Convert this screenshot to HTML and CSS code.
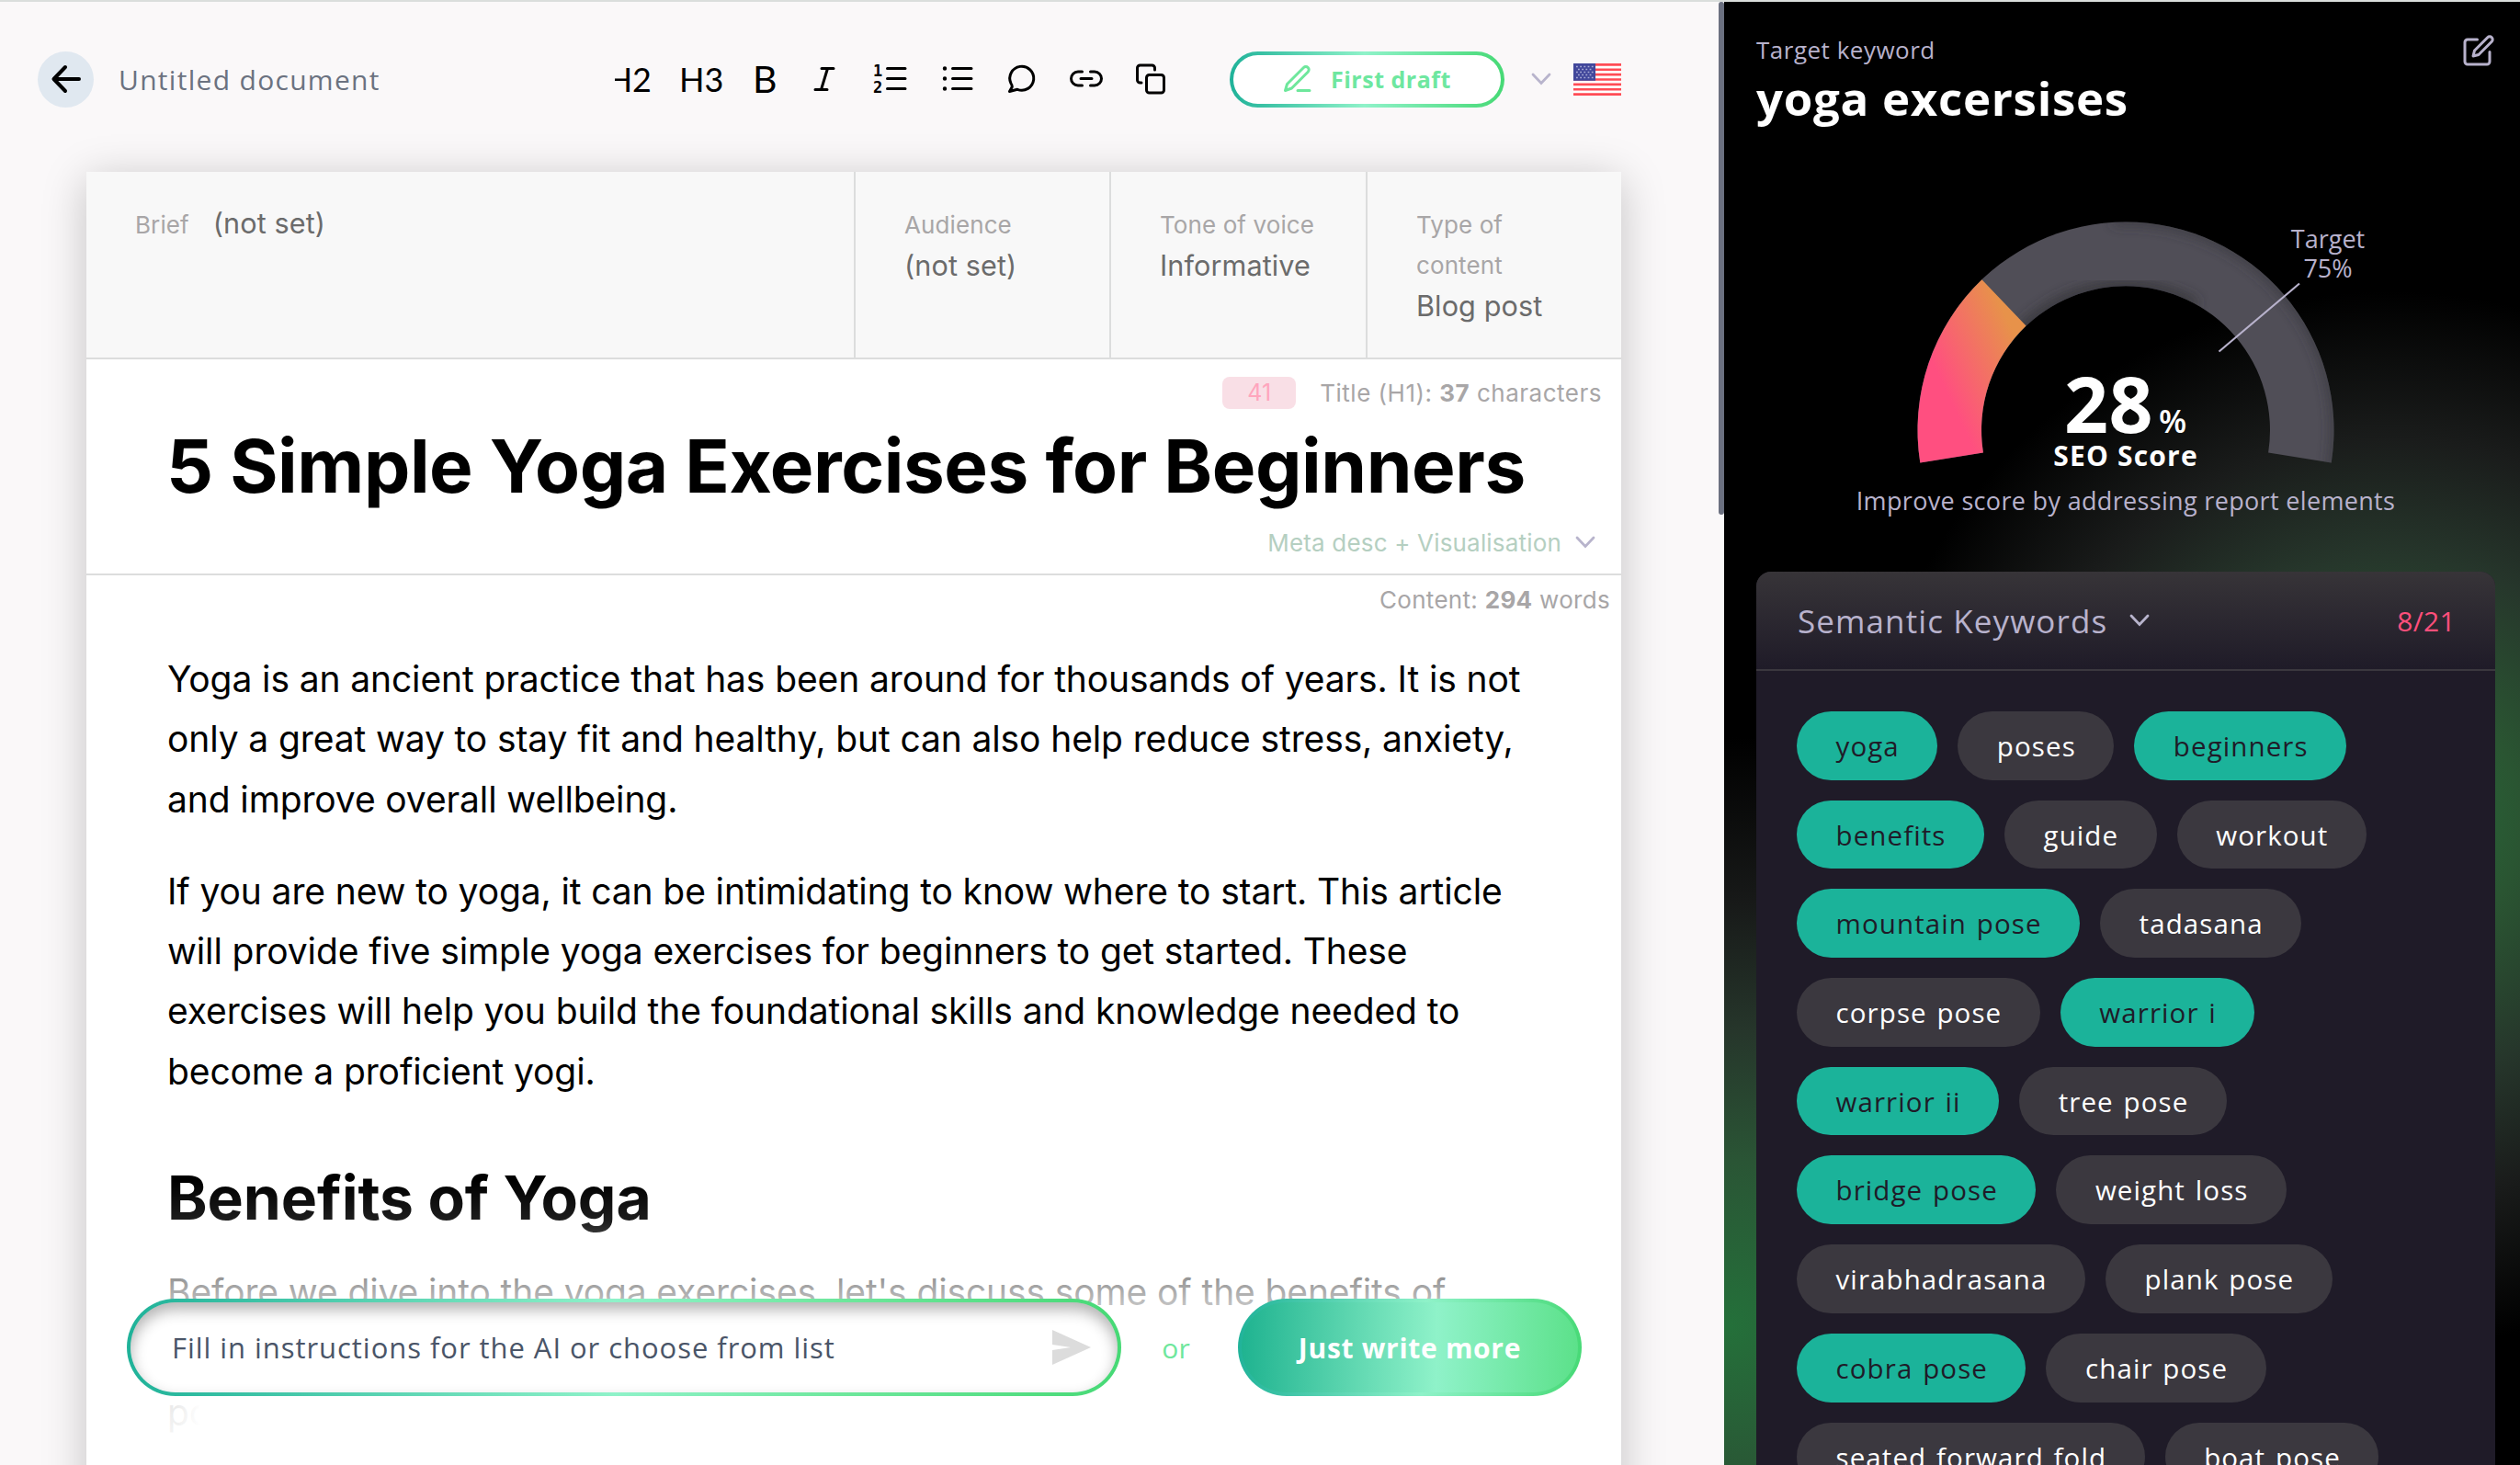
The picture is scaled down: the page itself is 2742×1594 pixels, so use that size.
FILE: index.html
```
<!DOCTYPE html>
<html lang="en">

	<head>
		<meta charset="UTF-8">
		<title>Untitled document</title>
		<link rel="stylesheet" href="styles.css">
	</head>

	<body>
		<div class="editor">
			<div class="header">
				<a class="back" href="#">
					<svg width="34" height="34" viewBox="0 0 34 34"><path d="M31 17H4M16 4L3.500 17L16 30" /></svg>
				</a>
				<span class="docName">Untitled document</span>
				<div class="toolbar">
					<span class="tool h2"><span>H2</span></span>
					<span class="tool h3">H3</span>
					<span class="tool bold">B</span>
					<svg class="tool" width="40" height="36" viewBox="0 0 40 36"><path d="M17 6.500H30M10 29.500H23M23.500 6.500L16.500 29.500" /></svg>
					<svg class="tool" width="42" height="36" viewBox="0 0 42 36">
						<text x="3" y="15">1</text>
						<text x="3" y="33">2</text>
						<path d="M18.500 6.500H38M18.500 17.500H38M18.500 28.500H38" />
					</svg>
					<svg class="tool" width="42" height="36" viewBox="0 0 42 36">
						<path d="M17.500 6.500H38M17.500 17.500H38M17.500 28.500H38" />
						<path class="dot" d="M9 6.500h.01M9 17.500h.01M9 28.500h.01" />
					</svg>
					<svg class="tool" width="41" height="36" viewBox="0 0 41 36"><path d="M8.900 22.500A13 13 0 1 1 16 29.300L7.500 31.500L10.300 26.500Q10.300 24.500 8.900 22.500Z" /></svg>
					<svg class="tool" width="40" height="36" viewBox="0 0 40 36"><path d="M15.500 10H11a7.500 7.500 0 0 0 0 15h4.500M24.500 10H29a7.500 7.500 0 0 1 0 15h-4.500M14 17.500H26" /></svg>
					<svg class="tool" width="40" height="36" viewBox="0 0 40 36">
						<rect x="15.500" y="13.500" width="19" height="19.500" rx="3" />
						<path d="M24.500 8V6a3 3 0 0 0-3-3H8.500a3 3 0 0 0-3 3v13a3 3 0 0 0 3 3h1.500" />
					</svg>
				</div>
				<div class="draft">
					<svg width="32" height="32" viewBox="0 0 32 32"><path d="M16 28.500H29M22.500 3.500a3.300 3.300 0 0 1 4.700 4.700L9.500 26L2.500 28.500L4.500 21.500Z" /></svg>
					<span>First draft</span>
				</div>
				<svg class="chevron headChevron" width="22" height="14" viewBox="0 0 22 14"><path d="M2 2L11 11.500L20 2" /></svg>
				<svg class="flag" width="52" height="35" viewBox="0 0 52 35">
					<rect width="52" height="35" fill="#fff" />
					<path d="M0 1.350H52M0 6.730H52M0 12.120H52M0 17.500H52M0 22.880H52M0 28.270H52M0 33.650H52" stroke="#ff4b55" stroke-width="2.690" />
					<rect width="24" height="18.800" fill="#41479b" />
					<path d="M3 3.500H22M3 9.500H22M3 15.500H22" stroke="#a9acd6" stroke-width="1.500" stroke-dasharray="1.800 2.400" />
					<path d="M5 6.500H20M5 12.500H20" stroke="#a9acd6" stroke-width="1.500" stroke-dasharray="1.800 2.400" />
				</svg>
			</div>
			<div class="page">
				<div class="brief">
					<div class="item wide"><label>Brief</label><b>(not set)</b></div>
					<div class="item"><label>Audience</label><b>(not set)</b></div>
					<div class="item"><label>Tone of voice</label><b>Informative</b></div>
					<div class="item"><label>Type of content</label><b>Blog post</b></div>
				</div>
				<div class="title">
					<div class="counter">
						<span class="badge">41</span>
						<span class="chars">Title (H1): <b>37</b> characters</span>
					</div>
					<h1>5 Simple Yoga Exercises for Beginners</h1>
					<div class="meta">
						<span>Meta desc + Visualisation</span>
						<svg class="chevron" width="22" height="14" viewBox="0 0 22 14"><path d="M2 2L11 11.500L20 2" /></svg>
					</div>
				</div>
				<div class="words">Content: <b>294</b> words</div>
				<div class="content">
					<p>Yoga is an ancient practice that has been around for thousands of years. It is not<br>only a great way to stay fit and healthy, but can also help reduce stress, anxiety,<br>and improve overall wellbeing.</p>
					<p>If you are new to yoga, it can be intimidating to know where to start. This article<br>will provide five simple yoga exercises for beginners to get started. These<br>exercises will help you build the foundational skills and knowledge needed to<br>become a proficient yogi.</p>
					<h2>Benefits of Yoga</h2>
					<p>Before we dive into the yoga exercises, let's discuss some of the benefits of<br><br>po</p>
				</div>
			</div>
			<div class="fade"></div>
			<div class="actions">
				<div class="prompt">
					<span>Fill in instructions for the AI or choose from list</span>
					<svg width="42" height="38" viewBox="0 0 42 38"><path d="M0 0L42 19L0 38V22L20 19L0 16Z" /></svg>
				</div>
				<span class="or">or</span>
				<button class="more">Just write more</button>
			</div>
			<div class="scroll"></div>
		</div>
		<div class="side">
			<div class="keyword">
				<div>
					<p>Target keyword</p>
					<h3>yoga excersises</h3>
				</div>
				<svg width="36" height="36" viewBox="0 0 24 24"><path d="M11 4H4a2 2 0 0 0-2 2v14a2 2 0 0 0 2 2h14a2 2 0 0 0 2-2v-7M18.500 2.500a2.120 2.120 0 0 1 3 3L12 15l-4 1 1-4Z" /></svg>
			</div>
			<svg class="gauge" width="866" height="400" viewBox="1876 169 866 400">
				<defs>
					<linearGradient id="hot" gradientUnits="userSpaceOnUse" x1="2120" y1="430" x2="2205" y2="390">
						<stop offset="0" stop-color="#ff4f80" />
						<stop offset="1" stop-color="#e7924a" />
					</linearGradient>
					<filter id="soft"><feGaussianBlur stdDeviation="7" /></filter>
					<clipPath id="arc"><path d="M2089.300 502.400A226.500 226.500 0 1 1 2536.700 502.400L2468.100 491.600A157 157 0 1 0 2157.900 491.600Z" /></clipPath>
				</defs>
				<path fill="#504e57" d="M2089.300 502.400A226.500 226.500 0 1 1 2536.700 502.400L2468.100 491.600A157 157 0 1 0 2157.900 491.600Z" />
				<g clip-path="url(#arc)">
					<path d="M2536.700 512A228 228 0 0 0 2300 239" fill="none" stroke="#35343a" stroke-width="8" filter="url(#soft)" />
					<path d="M2190 370A157 157 0 0 1 2390 331" fill="none" stroke="#333236" stroke-width="10" filter="url(#soft)" />
				</g>
				<path fill="url(#hot)" d="M2089.300 502.400A226.500 226.500 0 0 1 2156.500 303.300L2204.500 353.500A157 157 0 0 0 2157.900 491.600Z" />
				<path d="M2502 307.500L2414.500 381.500" stroke="#b8b2cc" stroke-width="2.200" />
				<text class="target" x="2533" y="269">Target</text>
				<text class="target" x="2533" y="300.500">75%</text>
				<text class="num" x="2246" y="470">28</text>
				<text class="pct" x="2349" y="470">%</text>
				<text class="seo" x="2313" y="506">SEO Score</text>
				<text class="hint" x="2313" y="553.500">Improve score by addressing report elements</text>
			</svg>
			<div class="card">
				<div class="cardHead">
					<span class="name">Semantic Keywords</span>
					<svg class="chevron" width="22" height="14" viewBox="0 0 22 14"><path d="M2 2L11 11.500L20 2" /></svg>
					<span class="count">8/21</span>
				</div>
				<div class="chips">
					<span class="on">yoga</span>
					<span>poses</span>
					<span class="on">beginners</span>
					<span class="on">benefits</span>
					<span>guide</span>
					<span>workout</span>
					<span class="on">mountain pose</span>
					<span>tadasana</span>
					<span>corpse pose</span>
					<span class="on">warrior i</span>
					<span class="on">warrior ii</span>
					<span>tree pose</span>
					<span class="on">bridge pose</span>
					<span>weight loss</span>
					<span>virabhadrasana</span>
					<span>plank pose</span>
					<span class="on">cobra pose</span>
					<span>chair pose</span>
					<span>seated forward fold</span>
					<span>boat pose</span>
				</div>
			</div>
		</div>
	</body>

</html>
```
FILE: styles.css
```
* {
	margin: 0;
	padding: 0;
	box-sizing: border-box;
}

body {
	display: flex;
	height: 1594px;
	overflow: hidden;
	border-top: 2px solid #dadedc;
	font-family: "Open Sans", sans-serif;
}

svg {
	display: block;
	flex: none;
}

.editor {
	position: relative;
	width: 1876px;
	height: 1592px;
	overflow: hidden;
	background: #faf8f9;
}

/*top bar*/
.header {
	display: flex;
	align-items: center;
	height: 168px;
	padding-left: 41px;
}

.back {
	display: flex;
	align-items: center;
	justify-content: center;
	width: 61px;
	height: 61px;
	border-radius: 50%;
	background: #e0e8f0;
}

.back path {
	fill: none;
	stroke: #000;
	stroke-width: 4;
	stroke-linecap: round;
	stroke-linejoin: round;
}

.docName {
	width: 536px;
	margin-left: 27px;
	font-size: 30px;
	letter-spacing: 1.3px;
	color: #6b7280;
}

.toolbar {
	display: flex;
	align-items: center;
	gap: 30px;
}

.tool {
	font-family: Lato, sans-serif;
	font-size: 36px;
	line-height: 44px;
	color: #000;
}

.tool path,
.tool rect {
	fill: none;
	stroke: #000;
	stroke-width: 3;
	stroke-linecap: round;
	stroke-linejoin: round;
}

.tool .dot {
	stroke-width: 4.4;
}

.tool text {
	font: bold 17px "DejaVu Sans Mono", monospace;
}

/*left edge of the icon is cropped*/
.h2 {
	display: flex;
	justify-content: flex-end;
	width: 40px;
	margin-left: 4px;
	overflow: hidden;
}

.h3 {
	width: 50px;
}

.bold {
	width: 28px;
	font-size: 41px;
}

.draft {
	display: flex;
	align-items: center;
	gap: 20px;
	width: 299px;
	height: 61px;
	margin-left: 66px;
	padding-left: 54px;
	border: 4px solid transparent;
	border-radius: 31px;
	background: linear-gradient(#fff, #fff) padding-box, linear-gradient(90deg, #1fb299, #8ff2c9 49%, #46d975) border-box;
	font-size: 25px;
	font-weight: 700;
	letter-spacing: 0.5px;
	color: #6ee7a0;
}

.draft path {
	fill: none;
	stroke: #6ee79c;
	stroke-width: 3;
	stroke-linecap: round;
	stroke-linejoin: round;
}

.chevron path {
	fill: none;
	stroke: #b8b4cc;
	stroke-width: 2.8;
	stroke-linecap: round;
}

.headChevron {
	margin-left: 29px;
}

.flag {
	margin-left: 24px;
}

/*document*/
.page {
	width: 1670px;
	height: 1500px;
	margin: 17px 0 0 94px;
	background: #fff;
	box-shadow: 0 8px 45px rgba(0, 0, 0, 0.22);
	font-family: Inter, sans-serif;
}

.brief {
	display: grid;
	grid-template-columns: 837px 278px 279px 276px;
	height: 204px;
	border-bottom: 2px solid #dcdddd;
	background: #f8f8f8;
}

.item {
	padding: 36px 50px 0 53px;
	border-right: 2px solid #dcdddd;
	line-height: 44px;
}

.item:last-child {
	border-right: none;
}

.item label {
	display: block;
	font-size: 26px;
	letter-spacing: 0.1px;
	color: #a8a6a7;
}

.item b {
	display: block;
	font-size: 30.6px;
	font-weight: 400;
	letter-spacing: 0.1px;
	color: #6b6b6b;
}

.wide {
	display: flex;
	gap: 26px;
}

.wide b {
	margin-top: -2px;
}

.title {
	height: 235px;
	padding-top: 19px;
	border-bottom: 2px solid #dcdddd;
}

.counter {
	display: flex;
	justify-content: flex-end;
	align-items: center;
	gap: 26px;
	height: 34px;
	padding-right: 21px;
	font-size: 26px;
	letter-spacing: 0.5px;
	color: #a8a6a7;
}

.badge {
	width: 80px;
	height: 35px;
	border-radius: 8px;
	background: #f9dfe6;
	line-height: 35px;
	text-align: center;
	font-size: 25px;
	letter-spacing: 0;
	color: #ffa5bd;
}

h1 {
	margin-left: 87px;
	font-size: 80px;
	line-height: 126px;
	letter-spacing: -0.45px;
	white-space: nowrap;
}

.meta {
	display: flex;
	justify-content: flex-end;
	align-items: center;
	gap: 15px;
	height: 40px;
	padding-right: 28px;
	font-size: 26px;
	letter-spacing: 0.18px;
	color: #b5cfc1;
}

.words {
	height: 54px;
	padding-right: 12px;
	line-height: 54px;
	text-align: right;
	font-size: 26px;
	letter-spacing: 0.3px;
	color: #a8a6a7;
}

.content {
	margin: 26px 0 0 88px;
	white-space: nowrap;
}

.content p {
	margin-bottom: 35px;
	font-size: 39px;
	line-height: 65.3px;
	letter-spacing: -0.12px;
	color: #000;
}

.content h2 {
	margin: 60px 0 24px;
	font-size: 66px;
	line-height: 91px;
	letter-spacing: -0.1px;
}

/*bottom panel*/
.fade {
	position: absolute;
	left: 94px;
	bottom: 0;
	width: 1670px;
	height: 309px;
	background:
		linear-gradient(90deg, rgba(255, 255, 255, 0) 98px, #fff 124px) 0 165px no-repeat,
		linear-gradient(rgba(255, 255, 255, 0), rgba(255, 255, 255, 0.12) 45px, rgba(255, 255, 255, 0.35) 75px, rgba(255, 255, 255, 0.6) 107px, rgba(255, 255, 255, 0.82) 145px, rgba(255, 255, 255, 0.9) 230px, #fff);
}

.actions {
	display: flex;
	align-items: center;
	position: absolute;
	left: 138px;
	bottom: 75px;
	height: 106px;
}

.prompt {
	display: flex;
	align-items: center;
	justify-content: space-between;
	width: 1082px;
	height: 106px;
	padding: 0 29px 0 45px;
	border: 4px solid transparent;
	border-radius: 53px;
	background: linear-gradient(#fff, #fff) padding-box, linear-gradient(90deg, #1fb299, #8ff2c9 49%, #6ee79c 72%, #46d975) border-box;
	font-size: 31px;
	letter-spacing: 0.95px;
	color: #4a5568;
	position: relative;
}

/*inner shadow on top edge*/
.prompt:before {
	content: "";
	position: absolute;
	left: 0;
	top: 0;
	width: 100%;
	height: 100%;
	border-radius: 49px;
	box-shadow: inset 0 8px 16px rgba(0, 0, 0, 0.3);
}

.prompt path {
	fill: #dcdcdc;
}

.or {
	width: 127px;
	padding-right: 8px;
	text-align: center;
	font-size: 30px;
	color: #6ee79c;
}

.more {
	width: 374px;
	height: 106px;
	border: 4px solid transparent;
	border-radius: 53px;
	background: linear-gradient(91deg, #1fb390, #8ff2c9 58%, #5ce18a) padding-box, linear-gradient(93deg, #1fb299, #8ff2c9 54%, #46d975) border-box;
	font-family: "Open Sans", sans-serif;
	font-size: 30px;
	font-weight: 700;
	letter-spacing: 0.7px;
	color: #fff;
}

.scroll {
	position: absolute;
	right: 0;
	top: 0;
	width: 6px;
	height: 558px;
	border-radius: 3px;
	background: #6b7080;
}

/*report*/
.side {
	position: relative;
	width: 866px;
	height: 1592px;
	overflow: hidden;
	background:
		radial-gradient(circle 640px at 4px 1440px, #24703a, #2a5535 28%, #26362b 50%, rgba(26, 28, 27, 0.9) 72%, rgba(0, 0, 0, 0)),
		radial-gradient(circle 575px at 724px 890px, #24703a, #2a5532 25%, #26362b 50%, #1a1c1b 72%, #000) #000;
	color: #b8b2cc;
}

.keyword {
	display: flex;
	justify-content: space-between;
	height: 168px;
	padding: 32px 27px 0 35px;
}

.keyword p {
	font-size: 26px;
	line-height: 40px;
	letter-spacing: 0.5px;
}

.keyword h3 {
	font-size: 51px;
	line-height: 64px;
	letter-spacing: 0.7px;
	color: #fff;
}

.keyword svg {
	margin-top: 3px;
}

.keyword path {
	fill: none;
	stroke: #b8b2cc;
	stroke-width: 2;
	stroke-linejoin: round;
	stroke-linecap: round;
}

.gauge text {
	fill: #b8b2cc;
	font-size: 27px;
	text-anchor: middle;
}

.gauge .hint {
	letter-spacing: 0.33px;
}

.gauge .num {
	fill: #fff;
	font-size: 84px;
	font-weight: 700;
	letter-spacing: 0.5px;
	text-anchor: start;
}

.gauge .pct {
	fill: #fff;
	font-size: 35px;
	font-weight: 600;
	text-anchor: start;
}

.gauge .seo {
	fill: #fff;
	font-size: 30px;
	font-weight: 700;
	letter-spacing: 1.2px;
}

.card {
	width: 804px;
	height: 1000px;
	margin: 52px 0 0 35px;
	border-radius: 16px;
	background: #1f1b28;
}

.cardHead {
	display: flex;
	align-items: center;
	height: 108px;
	padding: 0 43px 0 45px;
	border-bottom: 2px solid #3b383f;
	border-radius: 16px 16px 0 0;
	background: linear-gradient(#373438, #1f1b28);
}

.cardHead .name {
	font-size: 35px;
	letter-spacing: 1.1px;
}

.cardHead .chevron {
	margin-left: 24px;
}

.count {
	margin-left: auto;
	font-size: 30px;
	letter-spacing: 0.3px;
	color: #ff4f7b;
}

.chips {
	display: flex;
	flex-wrap: wrap;
	gap: 22px;
	padding: 44px 44px 0;
}

.chips span {
	height: 74.7px;
	padding: 0 41.5px 0 42.5px;
	border-radius: 38px;
	background: #3b383f;
	line-height: 75px;
	font-size: 29.5px;
	letter-spacing: 1.1px;
	word-spacing: 2px;
	color: #fff;
}

.chips .on {
	background: #1bb39a;
	color: #1f1b28;
}
```
